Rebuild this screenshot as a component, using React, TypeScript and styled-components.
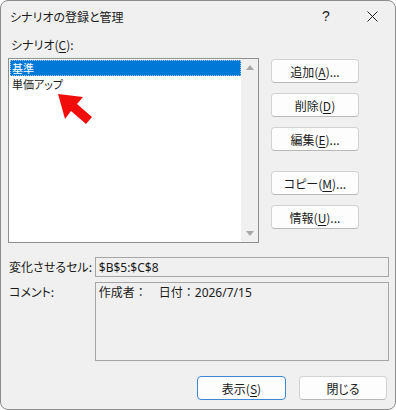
import styled, { createGlobalStyle } from "styled-components";

const GlobalStyle = createGlobalStyle`
  html, body {
    margin: 0;
    padding: 0;
    background: #ffffff;
  }
  body {
    font-family: "Noto Sans CJK JP", "Noto Sans", sans-serif;
    font-size: 12px;
    color: #1b1b1b;
    font-feature-settings: "palt";
  }
`;

const Window = styled.div`
  position: relative;
  width: 396px;
  height: 410px;
  box-sizing: border-box;
  border: 1px solid #8c8c8c;
  border-radius: 8px;
  background: #f0f0f0;
  display: flex;
  flex-direction: column;
  overflow: hidden;
`;

const TitleBar = styled.div`
  height: 30px;
  display: flex;
  align-items: center;
  padding-left: 9px;
`;

const Title = styled.div`
  flex: 1;
  font-size: 12px;
  color: #1b1b1b;
`;

const CaptionButton = styled.div`
  width: 46px;
  height: 30px;
  display: flex;
  align-items: center;
  justify-content: center;
  font-family: "Liberation Sans", sans-serif;
  font-size: 14px;
  color: #222;
`;

const Body = styled.div`
  flex: 1;
  display: flex;
  flex-direction: column;
  padding: 0 6px 0 7px;
`;

const Label = styled.div<{ $indent?: number }>`
  line-height: 14px;
  margin-top: 7px;
  padding-left: ${(p) => p.$indent ?? 0}px;
`;

const Key = styled.span`
  text-decoration: underline;
  text-underline-offset: 2px;
`;

const TopSection = styled.div`
  display: flex;
  gap: 12px;
  margin-top: 6px;
`;

const ListBox = styled.div`
  width: 251px;
  height: 185px;
  box-sizing: border-box;
  border: 1px solid #8f8f8f;
  background: #ffffff;
  display: flex;
`;

const ListItems = styled.div`
  flex: 1;
  padding: 1px 0 0 1px;
`;

const ListItem = styled.div<{ $selected?: boolean }>`
  height: 16px;
  line-height: 16px;
  font-size: 11px;
  padding: 0 2px;
  overflow: hidden;
  background: ${(p) => (p.$selected ? "#0078d7" : "transparent")};
  color: ${(p) => (p.$selected ? "#ffffff" : "#1b1b1b")};
  outline: ${(p) => (p.$selected ? "1px dotted #9cc6ee" : "none")};
  outline-offset: -1px;
`;

const ScrollBar = styled.div`
  width: 17px;
  background: #f0f0f0;
  display: flex;
  flex-direction: column;
  justify-content: space-between;
  align-items: center;
  padding: 6px 0;
`;

const Arrow = styled.div<{ $down?: boolean }>`
  width: 0;
  height: 0;
  border-left: 4px solid transparent;
  border-right: 4px solid transparent;
  ${(p) =>
    p.$down
      ? "border-top: 5px solid #a8a8a8;"
      : "border-bottom: 5px solid #a8a8a8;"}
`;

const ButtonColumn = styled.div`
  display: flex;
  flex-direction: column;
  padding-top: 1px;
`;

const Button = styled.div<{ $gap?: number; $default?: boolean; $width?: number }>`
  width: ${(p) => p.$width ?? 88}px;
  height: 24px;
  box-sizing: border-box;
  margin-top: ${(p) => p.$gap ?? 0}px;
  border: 1px solid ${(p) => (p.$default ? "#3f86d6" : "#d2d2d2")};
  border-bottom-color: ${(p) => (p.$default ? "#3f86d6" : "#b8b8b8")};
  border-radius: 4px;
  background: #fdfdfd;
  display: flex;
  align-items: center;
  justify-content: center;
  color: #1b1b1b;
`;

const FieldRow = styled.div<{ $gap: number }>`
  display: flex;
  margin-top: ${(p) => p.$gap}px;
`;

const FieldLabel = styled.div`
  width: 86px;
  padding-left: 1px;
  line-height: 20px;
`;

const Field = styled.div<{ $height: number }>`
  width: 295px;
  height: ${(p) => p.$height}px;
  box-sizing: border-box;
  border: 1px solid #a6a6a6;
  background: #f0f0f0;
  padding: 0 3px;
  line-height: 18px;
  color: #1b1b1b;
  font-feature-settings: normal;
`;

const Mono = styled.span`
  font-family: "Noto Sans", sans-serif;
`;

const Footer = styled.div`
  display: flex;
  justify-content: flex-end;
  gap: 13px;
  margin-top: 15px;
  padding-right: 2px;
`;

const Pointer = styled.svg`
  position: absolute;
  left: 0;
  top: 0;
  pointer-events: none;
`;

export default function App() {
  return (
    <>
      <GlobalStyle />
      <Window>
        <TitleBar>
          <Title>シナリオの登録と管理</Title>
          <CaptionButton>?</CaptionButton>
          <CaptionButton>
            <svg width="11" height="11" viewBox="0 0 11 11">
              <path d="M0.5 0.5 L10.5 10.5 M10.5 0.5 L0.5 10.5" stroke="#222" strokeWidth="1" />
            </svg>
          </CaptionButton>
        </TitleBar>
        <Body>
          <Label $indent={3}>
            シナリオ(<Key>C</Key>):
          </Label>
          <TopSection>
            <ListBox>
              <ListItems>
                <ListItem $selected>基準</ListItem>
                <ListItem>単価アップ</ListItem>
              </ListItems>
              <ScrollBar>
                <Arrow />
                <Arrow $down />
              </ScrollBar>
            </ListBox>
            <ButtonColumn>
              <Button>
                追加(<Key>A</Key>)...
              </Button>
              <Button $gap={10}>
                削除(<Key>D</Key>)
              </Button>
              <Button $gap={10}>
                編集(<Key>E</Key>)...
              </Button>
              <Button $gap={20}>
                コピー(<Key>M</Key>)...
              </Button>
              <Button $gap={10}>
                情報(<Key>U</Key>)...
              </Button>
            </ButtonColumn>
          </TopSection>
          <FieldRow $gap={14}>
            <FieldLabel>変化させるセル:</FieldLabel>
            <Field $height={20}>
              <Mono>$B$5:$C$8</Mono>
            </Field>
          </FieldRow>
          <FieldRow $gap={5}>
            <FieldLabel>コメント:</FieldLabel>
            <Field $height={79}>
              作成者：　日付：<Mono>2026/7/15</Mono>
            </Field>
          </FieldRow>
          <Footer>
            <Button $default $width={89}>
              表示(<Key>S</Key>)
            </Button>
            <Button>閉じる</Button>
          </Footer>
        </Body>
        <Pointer width="396" height="410" viewBox="0 0 396 410">
          <polygon
            points="57,93 82,96 76,103 91,116 85,123 70,110 64,118"
            fill="#f20d0d"
          />
        </Pointer>
      </Window>
    </>
  );
}
